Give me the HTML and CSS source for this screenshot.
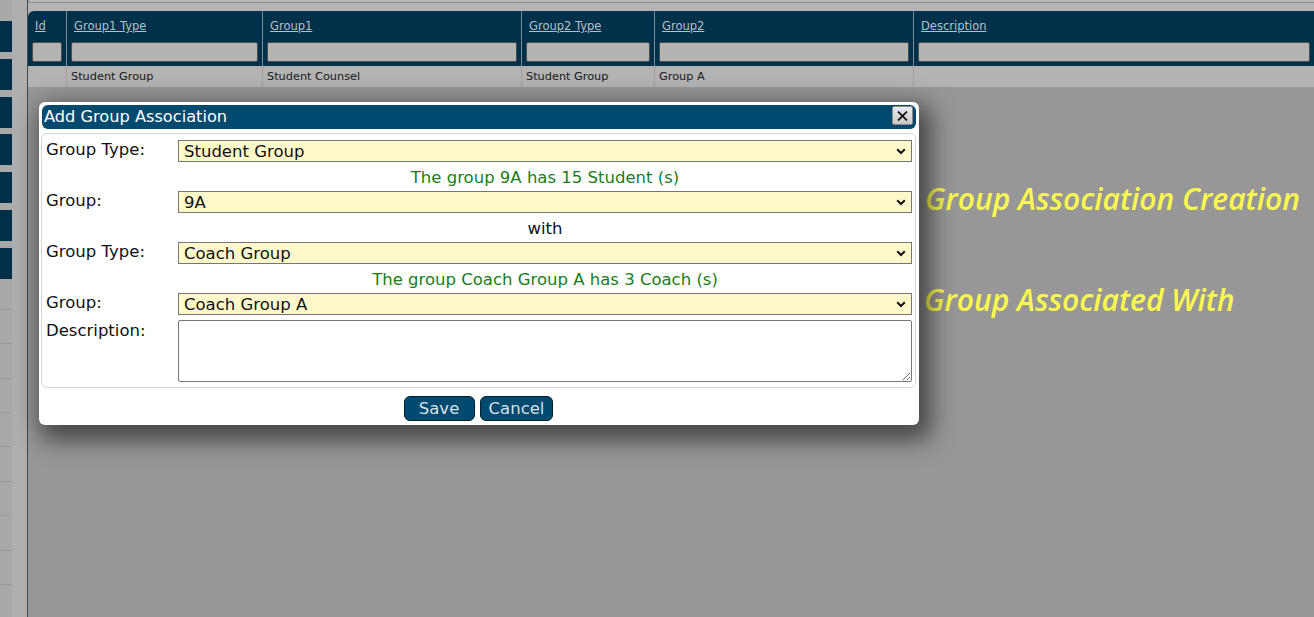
FILE: index.html
```html
<!DOCTYPE html>
<html>
<head>
<meta charset="utf-8">
<title>Add Group Association</title>
<link rel="stylesheet" href="styles.css">
</head>
<body>
<div class="page">
  <aside class="sidebar">
    <div class="sb-left">
      <div class="sb-blocks">
        <div class="sb-block"></div><div class="sb-block"></div><div class="sb-block"></div><div class="sb-block"></div><div class="sb-block"></div><div class="sb-block"></div><div class="sb-block"></div>
      </div>
      <div class="sb-lines">
        <div class="sb-line"></div><div class="sb-line"></div><div class="sb-line"></div><div class="sb-line"></div><div class="sb-line"></div><div class="sb-line"></div><div class="sb-line"></div><div class="sb-line"></div><div class="sb-line"></div>
      </div>
    </div>
    <div class="sb-right"></div>
  </aside>

  <main class="main">
    <div class="topzone">
      <div class="toolbar"></div>
    </div>
    <div class="grid">
      <div class="hcell first"><a class="hlink">Id</a><div class="filter"></div></div>
      <div class="hcell"><a class="hlink">Group1 Type</a><div class="filter"></div></div>
      <div class="hcell"><a class="hlink">Group1</a><div class="filter"></div></div>
      <div class="hcell"><a class="hlink">Group2 Type</a><div class="filter"></div></div>
      <div class="hcell"><a class="hlink">Group2</a><div class="filter"></div></div>
      <div class="hcell last"><a class="hlink">Description</a><div class="filter"></div></div>

      <div class="dcell"></div>
      <div class="dcell">Student Group</div>
      <div class="dcell">Student Counsel</div>
      <div class="dcell">Student Group</div>
      <div class="dcell">Group A</div>
      <div class="dcell last"></div>
    </div>
    <div class="rest"></div>
  </main>

  <div class="note note-1">Group Association Creation</div>
  <div class="note note-2">Group Associated With</div>

  <div class="dialog">
    <div class="titlebar">
      <span class="title">Add Group Association</span>
      <button class="close" type="button" aria-label="Close">
        <svg width="11" height="10" viewBox="0 0 11 10"><path d="M1 0.5 L10 9.5 M10 0.5 L1 9.5" stroke="#1a1a1a" stroke-width="1.8" fill="none"/></svg>
      </button>
    </div>
    <div class="panel">
      <div class="form">
        <div class="label">Group Type:</div>
        <div class="select"><span>Student Group</span><svg class="chev" width="10" height="7" viewBox="0 0 10 7"><path d="M1.2 1.2 L5 5 L8.8 1.2" stroke="#111" stroke-width="2" fill="none"/></svg></div>
        <div></div>
        <div class="msg green">The group 9A has 15 Student (s)</div>

        <div class="label">Group:</div>
        <div class="select"><span>9A</span><svg class="chev" width="10" height="7" viewBox="0 0 10 7"><path d="M1.2 1.2 L5 5 L8.8 1.2" stroke="#111" stroke-width="2" fill="none"/></svg></div>
        <div></div>
        <div class="msg">with</div>

        <div class="label">Group Type:</div>
        <div class="select"><span>Coach Group</span><svg class="chev" width="10" height="7" viewBox="0 0 10 7"><path d="M1.2 1.2 L5 5 L8.8 1.2" stroke="#111" stroke-width="2" fill="none"/></svg></div>
        <div></div>
        <div class="msg green">The group Coach Group A has 3 Coach (s)</div>

        <div class="label">Group:</div>
        <div class="select"><span>Coach Group A</span><svg class="chev" width="10" height="7" viewBox="0 0 10 7"><path d="M1.2 1.2 L5 5 L8.8 1.2" stroke="#111" stroke-width="2" fill="none"/></svg></div>

        <div class="label desc-label">Description:</div>
        <textarea class="desc"></textarea>
      </div>
    </div>
    <div class="buttons">
      <button class="btn" type="button">Save</button>
      <button class="btn" type="button">Cancel</button>
    </div>
  </div>
</div>
</body>
</html>
```

FILE: styles.css
```css
* { box-sizing: border-box; }

html, body {
  margin: 0;
  padding: 0;
}

body {
  width: 1314px;
  height: 617px;
  overflow: hidden;
  background: #979797;
  font-family: "DejaVu Sans", Verdana, sans-serif;
}

.page {
  position: relative;
  display: flex;
  width: 1314px;
  height: 617px;
  overflow: hidden;
}

/* ---------- sidebar ---------- */
.sidebar {
  flex: none;
  width: 28px;
  display: flex;
  background: #a9a9a9;
  border-right: 1px solid #3b4a55;
  overflow: hidden;
}

.sb-left {
  width: 12px;
  display: flex;
  flex-direction: column;
}

.sb-blocks {
  padding-top: 21px;
  display: flex;
  flex-direction: column;
  gap: 6.8px;
}

.sb-block {
  height: 31px;
  background: #003049;
}

.sb-lines {
  padding-top: 30px;
}

.sb-line {
  height: 34.4px;
  border-top: 1px solid #9a9a9a;
}

.sb-right {
  flex: 1;
  background: #afafaf;
}

/* ---------- main ---------- */
.main {
  flex: 1;
  display: flex;
  flex-direction: column;
  min-width: 0;
}

.topzone {
  height: 11px;
  background: #b4b4b4;
}

.toolbar {
  height: 3px;
  background: #b9b9b9;
  border-bottom: 1px solid #8f8f8f;
  border-left: 1px solid #8f8f8f;
  border-bottom-left-radius: 4px;
}

.grid {
  display: grid;
  grid-template-columns: 39px 196px 259px 133px 259px 1fr;
  background: #b3b3b3;
}

.hcell {
  height: 55px;
  background: #00304a;
  border-right: 1px solid #7d8e9a;
  padding: 0 4px 0 4px;
  display: flex;
  flex-direction: column;
}

.hcell.first { border-top-left-radius: 6px; }
.hcell.last { border-right: none; padding-right: 4px; }

.hlink {
  display: block;
  height: 31px;
  line-height: 31px;
  padding-left: 3px;
  font-size: 11.5px;
  color: #b3c2cc;
  text-decoration: underline;
}

.filter {
  height: 20px;
  background: #b3b3b3;
  border: 1px solid #4a4f53;
  border-radius: 2px;
}

.dcell {
  height: 21px;
  line-height: 22px;
  font-size: 11.3px;
  color: #1a1a1a;
  padding-left: 4px;
  border-right: 1px solid #9f9f9f;
  white-space: nowrap;
}

.dcell.last { border-right: none; }

.rest {
  flex: 1;
  background: #979797;
}

/* ---------- annotations ---------- */
.note {
  position: absolute;
  font-family: "Open Sans", Lato, sans-serif;
  font-style: italic;
  font-weight: 600;
  font-size: 30px;
  color: #fbf84e;
  white-space: nowrap;
  line-height: 36px;
}

.note-1 { left: 925px; top: 181px; }
.note-2 { left: 924px; top: 282px; }

/* ---------- dialog ---------- */
.dialog {
  position: absolute;
  left: 39px;
  top: 102px;
  width: 880px;
  height: 323px;
  background: #fff;
  border-radius: 6px;
  padding: 3px 3px 0 2px;
  box-shadow: 6px 9px 24px 6px rgba(0, 0, 0, 0.55);
}

.titlebar {
  position: relative;
  height: 24px;
  margin-left: 1px;
  background: #004a6f;
  border-radius: 6px;
  display: flex;
  align-items: center;
  padding-left: 2px;
}

.title {
  color: #fff;
  font-size: 16.2px;
  line-height: 24px;
}

.close {
  position: absolute;
  right: 3px;
  top: 1px;
  width: 21px;
  height: 19px;
  padding: 0;
  margin: 0;
  border: 1px solid #8a8a8a;
  border-radius: 2px;
  background: linear-gradient(#ececec, #c9c9c9);
  display: flex;
  align-items: center;
  justify-content: center;
}

.panel {
  margin-top: 4px;
  height: 255px;
  border: 1px solid #d6d6d6;
  border-radius: 6px;
  padding: 6px 3px 0 4px;
}

.form {
  display: grid;
  grid-template-columns: 132px 734px;
  grid-auto-rows: auto;
}

.label {
  font-size: 16.5px;
  color: #111;
  line-height: 20px;
}

.select {
  height: 22px;
  background: #fff8cb;
  border: 1px solid #767676;
  display: flex;
  align-items: center;
  justify-content: space-between;
  padding: 0 4px 0 5px;
  font-size: 16.5px;
  color: #111;
}

.select span { line-height: 20px; padding-top: 1px; }

.chev { flex: none; margin-right: 1px; }

.msg {
  height: 29px;
  line-height: 31px;
  text-align: center;
  font-size: 16.5px;
  color: #111;
}

.msg.green { color: #1b7c1b; }

.desc-label { margin-top: 6px; }

.desc {
  margin-top: 5px;
  height: 62px;
  width: 734px;
  border: 1px solid #767676;
  border-radius: 2px;
  background: #fff;
  font-family: inherit;
  resize: vertical;
  display: block;
}

.buttons {
  display: flex;
  justify-content: center;
  gap: 5px;
  padding-top: 8px;
  padding-right: 0;
}

.btn {
  height: 25px;
  min-width: 71px;
  padding: 0 8px;
  background: #004a6f;
  border: 1px solid #00202f;
  border-radius: 6px;
  color: #d6e1e8;
  font-family: "DejaVu Sans", Verdana, sans-serif;
  font-size: 16.5px;
  line-height: 22px;
}
```
